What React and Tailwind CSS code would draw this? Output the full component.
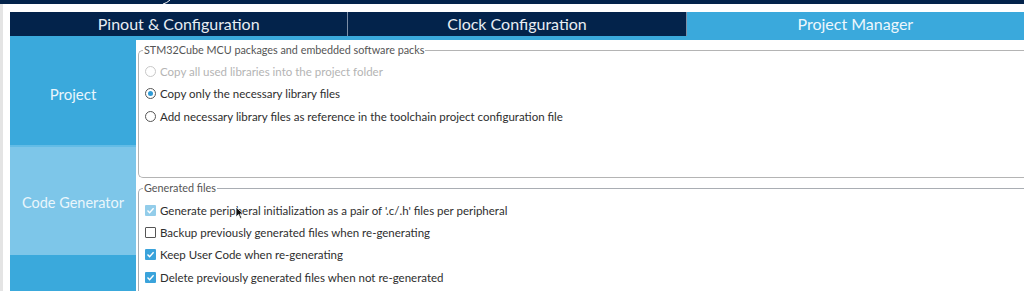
import { useState } from 'react'

const tabs = ['Pinout & Configuration', 'Clock Configuration', 'Project Manager']

const Radio = ({ checked, disabled, label }) => (
  <div className="flex items-center h-[22.5px] gap-[4px]">
    <span
      className={`w-[11px] h-[11px] rounded-full border flex items-center justify-center bg-white ${
        disabled ? 'border-[#c8c8c8]' : 'border-[#555]'
      }`}
    >
      {checked && <span className="w-[5px] h-[5px] rounded-full bg-[#2f9bd6]" />}
    </span>
    <span className={disabled ? 'text-[#b4b4b4]' : 'text-[#2e2e2e]'}>{label}</span>
  </div>
)

const Check = ({ checked, disabled, label }) => (
  <div className="flex items-center h-[22.4px] gap-[4px]">
    <span
      className={`w-[11px] h-[11px] flex items-center justify-center rounded-[1px] ${
        checked
          ? disabled
            ? 'bg-[#93cdea]'
            : 'bg-[#3aa3db]'
          : 'border border-[#555] bg-white'
      }`}
    >
      {checked && (
        <svg width="9" height="9" viewBox="0 0 9 9">
          <path d="M1.5 4.6 L3.6 6.7 L7.6 2.2" fill="none" stroke="white" strokeWidth="1.4" />
        </svg>
      )}
    </span>
    <span className="text-[#2e2e2e]">{label}</span>
  </div>
)

export default function App() {
  const [active] = useState(2)

  return (
    <div className="relative w-[1024px] h-[291px] bg-white overflow-hidden font-['Lato',sans-serif]">
      {/* top window strip */}
      <div className="relative h-[4px] bg-[#03234b]">
        <svg className="absolute left-[162px] top-0" width="10" height="4" viewBox="0 0 10 4">
          <path d="M1 4 Q5 3 8 0" fill="none" stroke="#ffffff" strokeWidth="1" />
        </svg>
      </div>

      <div className="flex h-[287px]">
        <div className="w-[3px] shrink-0 bg-[#e4e4e4]" />
        <div className="flex-1 pl-[7px] pt-[8px] flex flex-col">
          {/* Tabs */}
          <div className="flex h-[24px] shrink-0">
            {tabs.map((t, i) => (
              <div
                key={t}
                className={`flex-1 flex items-center justify-center text-[16px] ${
                  i === active
                    ? 'bg-[#3aa9dc] text-[#eef7fc]'
                    : 'bg-[#03234b] text-[#e8edf3] border-r border-[#7c8ea6]'
                }`}
              >
                {t}
              </div>
            ))}
          </div>
          <div className="h-[4px] shrink-0 bg-[#3aa9dc]" />

          <div className="flex h-[251px] shrink-0">
            {/* Sidebar */}
            <div className="w-[126px] shrink-0 flex flex-col">
              <div className="h-[107px] shrink-0 pt-[4px] bg-[#3aa9dc] border-b-[2px] border-[#62bce6] flex items-center justify-center text-[15px] text-[#eaf6fc]">
                Project
              </div>
              <div className="h-[108px] shrink-0 pt-[3px] bg-[#7dc6e9] flex items-center justify-center text-[14.5px] text-[#eaf6fc]">
                Code Generator
              </div>
              <div className="flex-1 bg-[#3aa9dc]" />
            </div>

            {/* Content */}
            <div className="flex-1 pl-[2px] pt-[3px] text-[11.5px]">
              <fieldset className="h-[135px] border border-r-0 border-[#b4b4b4] rounded-l-[5px] pl-[6px]">
                <legend className="text-[10.8px] text-[#555] px-[1px] ml-[-2px] leading-[14px]">
                  STM32Cube MCU packages and embedded software packs
                </legend>
                <div className="pt-[3px]">
                  <Radio disabled label="Copy all used libraries into the project folder" />
                  <Radio checked label="Copy only the necessary library files" />
                  <Radio label="Add necessary library files as reference in the toolchain project configuration file" />
                </div>
              </fieldset>

              <fieldset className="mt-[3px] h-[115px] border border-r-0 border-[#a9adb3] rounded-l-[5px] pl-[6px]">
                <legend className="text-[10.8px] text-[#555] px-[1px] ml-[-2px] leading-[14px]">Generated files</legend>
                <div className="pt-[4px]">
                  <Check checked disabled label="Generate peripheral initialization as a pair of '.c/.h' files per peripheral" />
                  <Check label="Backup previously generated files when re-generating" />
                  <Check checked label="Keep User Code when re-generating" />
                  <Check checked label="Delete previously generated files when not re-generated" />
                </div>
              </fieldset>
            </div>
          </div>
        </div>
      </div>

      {/* mouse pointer */}
      <svg className="absolute left-[235px] top-[206px]" width="10" height="14" viewBox="0 0 10 14">
        <path d="M1 1 L1 11 L3.5 8.6 L5.3 12.6 L6.8 11.9 L5 8 L8.4 8 Z" fill="#111" stroke="#fff" strokeWidth="0.8" />
      </svg>
    </div>
  )
}
